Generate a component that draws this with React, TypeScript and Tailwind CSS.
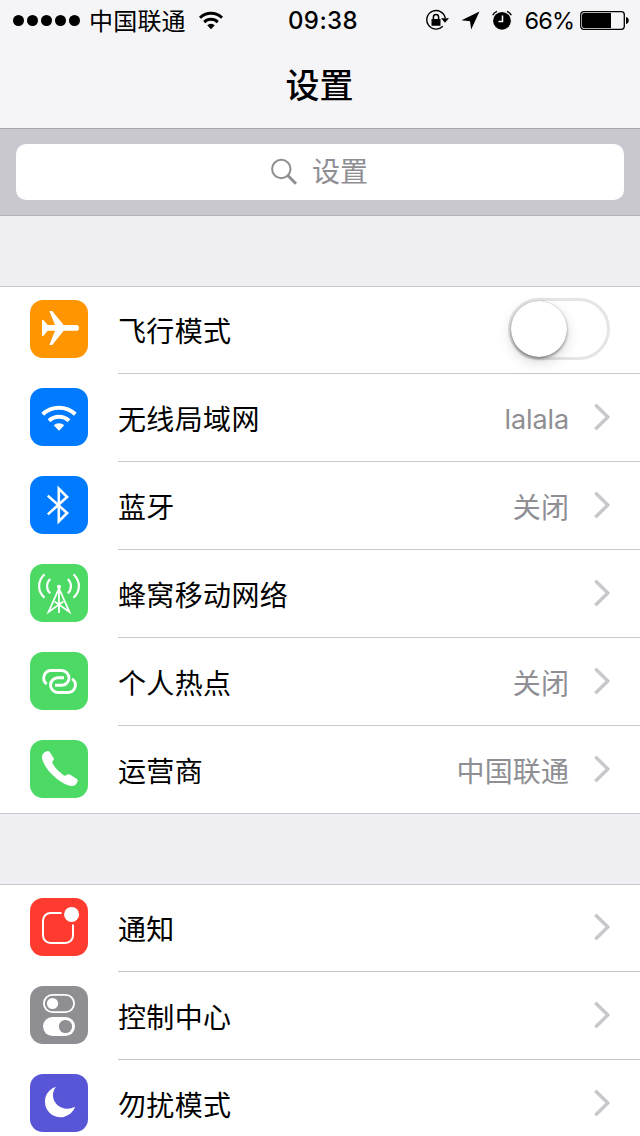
import type { ReactNode } from "react";

const PlaneIcon = () => (
  <path
    fill="#fff"
    d="M19.3 11h2.9L33.7 25.1H46.2a2.8 2.8 0 0 1 0 5.6H33.7L22.2 45h-2.9L25 30.7h-7.2L13.3 36H12V20h1.3l4.5 5.1H25z"
  />
);

const WifiIcon = () => (
  <g>
    <path fill="none" stroke="#fff" strokeWidth="4" d="M12.7 26.2A23.6 23.6 0 0 1 45.3 26.2M19 32.7A14.6 14.6 0 0 1 39 32.7" />
    <path fill="#fff" d="M23.7 37.2a7.9 7.9 0 0 1 10.6 0L29 42.8z" />
  </g>
);

const BluetoothIcon = () => (
  <path fill="none" stroke="#fff" strokeWidth="2.6" d="M17.8 19.6 37.1 37 28.8 45.4V12.7L37.1 21 17.8 38.4" />
);

const TowerIcon = () => (
  <g fill="none" stroke="#fff" strokeWidth="2">
    <circle cx="29" cy="22.8" r="2.1" fill="#fff" stroke="none" />
    <path strokeWidth="1.8" d="M29 23V49M28.7 25 18.6 48 33.4 37.5M29.3 25 39.4 48 24.6 37.5" />
    <path strokeWidth="2.2" d="M14.5 10.2C7.3 17 7.3 27.2 14.5 33.8M43.5 10.2C50.7 17 50.7 27.2 43.5 33.8M20.2 15C16 19 16 25.4 20.2 29.2M37.8 15C42 19 42 25.4 37.8 29.2" />
  </g>
);

const HotspotIcon = () => (
  <path
    fill="none"
    stroke="#fff"
    strokeWidth="2.9"
    d="M16.7 32.1A7.6 7.6 0 0 1 20.9 18.5H31.6A7.4 7.4 0 0 1 31.6 33.3H25M34 25.7H27.9A7.4 7.4 0 0 0 27.9 40.5H38A7.4 7.4 0 0 0 42 26.9"
  />
);

const PhoneIcon = () => (
  <path
    fill="#fff"
    d="M16 11.6C18 10.6 18.8 10.8 19.9 12.3L23.3 17.6C24.2 19 24 19.6 23.2 20.6 22 22.2 22.1 22.8 23.3 24.6 25.8 28.6 29.2 32.2 33.2 34.9 34.6 35.9 35.2 36 36.6 35 38 34 38.6 33.9 39.8 34.6L46.2 38.4C47.8 39.4 48 40.1 47.5 41.6 46.6 44.7 44.4 46.2 41.6 46 37 45.6 31.4 42.5 25.6 37.8 18.6 32 13.4 24.8 12.1 18.2 11.6 15 13 12.9 16 11.6z"
  />
);

const NoticeIcon = () => (
  <g>
    <path fill="none" stroke="#fff" strokeWidth="2" d="M31.5 15H20.5A7.5 7.5 0 0 0 13 22.5V37.5A7.5 7.5 0 0 0 20.5 45H35.5A7.5 7.5 0 0 0 43 37.5V26.5" />
    <circle cx="41.6" cy="16.4" r="7.5" fill="#fff" />
  </g>
);

const ControlIcon = () => (
  <g>
    <rect x="13.9" y="8.9" width="30.2" height="17.2" rx="8.6" fill="none" stroke="#fff" strokeWidth="1.8" />
    <circle cx="22.5" cy="17.5" r="5.6" fill="#fff" />
    <rect x="13" y="31" width="32" height="19" rx="9.5" fill="#fff" />
    <circle cx="35.5" cy="40.5" r="6.6" fill="#8e8e93" />
  </g>
);

const MoonIcon = () => (
  <path fill="#fff" d="M26.1 12.7A15.6 15.6 0 1 0 45.2 32.8C37.5 36.7 29.5 34.5 25.3 28.5 22 23.6 22.2 17.5 26.1 12.7z" />
);

const Chevron = () => (
  <svg className="mb-[2px] ml-6 block h-7 w-[17px] shrink-0" viewBox="0 0 17 28">
    <path d="M2.3 1.7 14.8 14 2.3 26.3" fill="none" stroke="#c7c7cc" strokeWidth="3.4" />
  </svg>
);

const Toggle = () => (
  <div className="mb-[2px] flex h-[62px] w-[102px] items-center rounded-full border-[3px] border-[#e5e5e5] bg-white">
    <div className="size-[56px] rounded-full bg-white shadow-[0_0_1px_rgba(0,0,0,0.35),0_2px_3px_rgba(0,0,0,0.35),0_5px_14px_rgba(0,0,0,0.16)]" />
  </div>
);

type RowProps = {
  color: string;
  icon: ReactNode;
  label: string;
  value?: string;
  toggle?: boolean;
  last?: boolean;
};

const Row = ({ color, icon, label, value, toggle, last }: RowProps) => (
  <div className="flex h-[88px] pl-[30px]">
    <div className={`mt-3.5 size-[58px] shrink-0 rounded-[13px] ${color}`}>
      <svg className="block size-[58px]" viewBox="0 0 58 58">{icon}</svg>
    </div>
    <div className={`ml-[30px] flex flex-1 items-center pr-[30px] ${last ? "pb-px" : "border-b border-[#c8c7cc]"}`}>
      <span className="flex-1 pt-[5px] text-[28px] leading-10 tracking-[0.35px] text-black">{label}</span>
      {value && (
        <span
          className={`pt-[5px] leading-10 text-[#8e8e93] ${value === "lalala" ? "text-[27px] tracking-[-0.1px]" : "text-[28px] tracking-[0.1px]"}`}
        >
          {value}
        </span>
      )}
      {toggle ? <Toggle /> : <Chevron />}
    </div>
  </div>
);

const StatusBar = () => (
  <div className="flex h-10 items-center text-black">
    <div className="flex flex-1 items-center pl-[13px]">
      <div className="flex gap-[3px]">
        {[0, 1, 2, 3, 4].map((i) => (
          <span key={i} className="size-[11px] rounded-full bg-black" />
        ))}
      </div>
      <span className="ml-[9px] pt-[3px] text-[24px] leading-10 tracking-[0.2px]">中国联通</span>
      <svg className="ml-[12px] block h-[19px] w-[26px]" viewBox="0 0 26 19">
        <path fill="none" stroke="#000" strokeWidth="2.9" d="M2 6.7A15.8 15.8 0 0 1 24 6.7M6.2 11.1A9.7 9.7 0 0 1 19.8 11.1" />
        <path d="M9.2 14.2a5.5 5.5 0 0 1 7.6 0L13 18.2z" />
      </svg>
    </div>
    <span className="w-[72px] translate-x-[2px] pt-[2px] text-center text-[24px] font-medium leading-10 tracking-[0.4px]">09:38</span>
    <div className="flex flex-1 items-center justify-end pr-[11px]">
      <svg className="block h-[22px] w-[24px]" viewBox="0 0 24 22">
        <path fill="none" stroke="#000" strokeWidth="1.4" d="M17.8 17.3A9.3 9.3 0 1 1 20.3 9.5" />
        <path d="M16 9.3h8l-4 4.4zM6.5 10h9v6.7h-9z" />
        <path fill="none" stroke="#000" strokeWidth="1.5" d="M8.4 10.5V8a2.6 2.6 0 0 1 5.2 0v2.5" />
      </svg>
      <svg className="ml-[12px] block h-5 w-[19px]" viewBox="0 0 19 20">
        <path d="M18.5 1.5 10.2 19.5 9 11.3.5 10.3z" />
      </svg>
      <svg className="ml-[12px] block h-5 w-[20px]" viewBox="0 0 20 20">
        <circle cx="10" cy="10.8" r="8.9" />
        <path fill="none" stroke="#000" strokeWidth="1.5" d="M.7 5.3Q2 2.5 5 1.4M19.3 5.3Q18 2.5 15 1.4" />
        <path fill="none" stroke="#fff" strokeWidth="1.5" d="M10.5 5.5v6H6.5" />
      </svg>
      <span className="ml-[12px] pt-[2px] text-[23.5px] leading-10 tracking-[-0.7px]">66%</span>
      <svg className="ml-[5.5px] block h-[19px] w-[49px]" viewBox="0 0 49 19">
        <rect x=".7" y=".7" width="43.6" height="17.6" rx="3" fill="none" stroke="#000" strokeWidth="1.3" />
        <path d="M2 4a2 2 0 0 1 2-2h27v15H4a2 2 0 0 1-2-2zM46 6a3.6 3.6 0 0 1 0 7z" />
      </svg>
    </div>
  </div>
);

export default function App() {
  return (
    <div className="h-[1136px] w-[640px] overflow-hidden bg-[#efeff4] font-['Inter','Noto_Sans_CJK_SC',sans-serif]">
      <header className="h-[129px] border-b border-[#a7a7aa] bg-[#f5f5f7]">
        <StatusBar />
        <h1 className="pr-px pt-[21px] text-center text-[34px] font-medium leading-[50px] text-black">设置</h1>
      </header>
      <div className="h-[87px] border-b border-[#b2b2b6] bg-[#c9c8ce] px-4 pt-[15px]">
        <div className="flex h-14 items-center justify-center rounded-[10px] bg-white pr-[2px] text-[#8e8e93]">
          <svg className="block size-[28px]" viewBox="0 0 28 28">
            <circle cx="11.3" cy="11" r="9.2" fill="none" stroke="#8e8e93" strokeWidth="2" />
            <path d="M17.8 17.5 26 25.7" stroke="#8e8e93" strokeWidth="3" />
          </svg>
          <span className="ml-[14px] text-[28px] leading-10">设置</span>
        </div>
      </div>
      <section className="mt-[70px] h-[528px] bg-white shadow-[inset_0_1px_#c8c7cc,inset_0_-1px_#c8c7cc]">
        <Row color="bg-[#ff9500]" icon={<PlaneIcon />} label="飞行模式" toggle />
        <Row color="bg-[#007aff]" icon={<WifiIcon />} label="无线局域网" value="lalala" />
        <Row color="bg-[#007aff]" icon={<BluetoothIcon />} label="蓝牙" value="关闭" />
        <Row color="bg-[#4cd964]" icon={<TowerIcon />} label="蜂窝移动网络" />
        <Row color="bg-[#4cd964]" icon={<HotspotIcon />} label="个人热点" value="关闭" />
        <Row color="bg-[#4cd964]" icon={<PhoneIcon />} label="运营商" value="中国联通" last />
      </section>
      <section className="mt-[70px] bg-white shadow-[inset_0_1px_#c8c7cc]">
        <Row color="bg-[#ff3b30]" icon={<NoticeIcon />} label="通知" />
        <Row color="bg-[#8e8e93]" icon={<ControlIcon />} label="控制中心" />
        <Row color="bg-[#5856d6]" icon={<MoonIcon />} label="勿扰模式" />
      </section>
    </div>
  );
}
